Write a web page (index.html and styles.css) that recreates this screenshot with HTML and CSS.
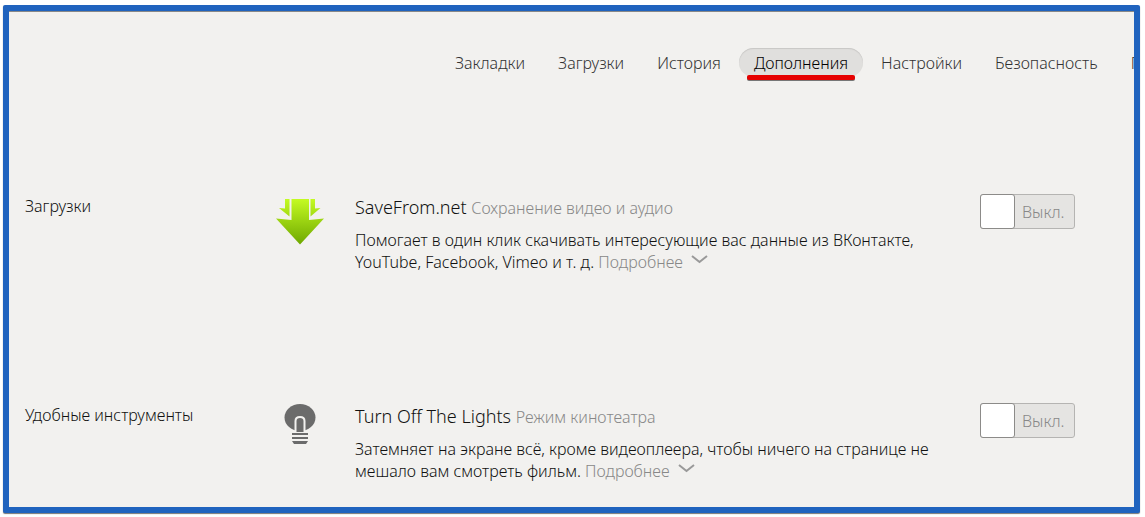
FILE: index.html
```html
<!DOCTYPE html>
<html lang="ru">
<head>
  <meta charset="UTF-8" />
  <title>Дополнения</title>
  <link rel="stylesheet" href="styles.css">
</head>
<body>
  <div class="window">
    <nav class="tabs">
      <a class="tab" href="#">Закладки</a>
      <a class="tab" href="#">Загрузки</a>
      <a class="tab" href="#">История</a>
      <a class="tab active" href="#">Дополнения</a>
      <a class="tab" href="#">Настройки</a>
      <a class="tab" href="#">Безопасность</a>
      <a class="tab" href="#">П</a>
    </nav>

    <main>
      <section class="addon">
        <div class="group">Загрузки</div>
        <svg class="icon" width="48" height="52" viewBox="0 -3 48 52">
          <defs>
            <linearGradient id="green" x1="0" y1="0" x2="0" y2="1">
              <stop offset="0" stop-color="#c4fb22" />
              <stop offset="1" stop-color="#6fa800" />
            </linearGradient>
          </defs>
          <path fill="url(#green)" d="M15.500 2h17.500v21l15-1.500L24 47.500L0 21.500L15.500 23zM9 2h4.500v17.500L3 11L9 11.500zM34.500 2H39v9.500l5.500-.500L34.500 19.500z" />
        </svg>
        <div class="info">
          <h2>SaveFrom.net <small>Сохранение видео и аудио</small></h2>
          <p>Помогает в один клик скачивать интересующие вас данные из ВКонтакте, YouTube, Facebook, Vimeo и т. д.
            <a class="more" href="#">Подробнее <svg width="17" height="9" viewBox="0 0 17 9"><path d="M1 1l7.500 6L16 1" /></svg></a></p>
        </div>
        <label class="switch"><input type="checkbox"><span>Выкл.</span></label>
      </section>

      <section class="addon">
        <div class="group">Удобные инструменты</div>
        <svg class="icon" width="48" height="52" viewBox="0 1 48 52">
          <ellipse cx="24" cy="15.500" rx="15.500" ry="13.500" fill="#6b6b6b" />
          <path fill="#6b6b6b" stroke="#f2f1ef" stroke-width="2" d="M19.500 30V19q0-4 4.500-4t4.500 4v11" />
          <path fill="#6b6b6b" d="M16 31h16v2H16zM16 35h16v2H16zM16 39h16l-2 3H18z" />
        </svg>
        <div class="info">
          <h2>Turn Off The Lights <small>Режим кинотеатра</small></h2>
          <p>Затемняет на экране всё, кроме видеоплеера, чтобы ничего на странице не мешало вам смотреть фильм.
            <a class="more" href="#">Подробнее <svg width="17" height="9" viewBox="0 0 17 9"><path d="M1 1l7.500 6L16 1" /></svg></a></p>
        </div>
        <label class="switch"><input type="checkbox"><span>Выкл.</span></label>
      </section>
    </main>
  </div>
</body>
</html>
```
FILE: styles.css
```css
* {
  box-sizing: border-box;
}

body {
  margin: 0;
  padding: 5px 5px 3px 3px;
  background: white;
  color: #111;
  font-family: "Noto Sans", "Open Sans", sans-serif;
  font-size: 16px;
  font-weight: 300;
  line-height: 22px;
}

a {
  color: inherit;
  text-decoration: none;
}

.window {
  border: 6px solid #2063be;
  border-radius: 2px;
  background: #f2f1ef;
  box-shadow: 0 1px 1px #777, inset 0 1px 0 #888;
  overflow: hidden;
}

.tabs {
  display: flex;
  gap: 3px;
  padding: 37px 0 0 431px;
}

.tab {
  flex: none;
  height: 29px;
  padding: 4px 15px;
  border-radius: 15px;
  color: #333;
}

.tab.active {
  position: relative;
  background: #e0dfdd;
  box-shadow: inset 0 1px 1px #c8c7c5;
  color: #000;
}

.tab.active::after {
  content: "";
  position: absolute;
  left: 8px;
  right: 8px;
  bottom: -3px;
  height: 5px;
  border-radius: 2px;
  background: #e60000;
  box-shadow: 0 1px 0 #777;
}

main {
  padding: 117px 59px 25px 16px;
}

.addon {
  display: grid;
  grid-template-columns: 251px 79px 1fr 95px;
  align-items: start;
}

.addon + .addon {
  margin-top: 130px;
}

.group {
  padding-top: 1px;
}

.info h2 {
  margin: 0;
  font-size: 18px;
  font-weight: 300;
  line-height: 26px;
}

.info small {
  font-size: 16px;
  color: #888;
}

.info p {
  max-width: 585px;
  margin: 8px 0 0;
}

.more {
  color: #888;
  white-space: nowrap;
}

.more svg {
  margin: 0 0 4px 4px;
  fill: none;
  stroke: #999;
  stroke-width: 2;
}

.switch {
  display: flex;
  width: 95px;
  height: 35px;
  border: 1px solid #b5b4b2;
  border-radius: 3px;
  background: #e5e4e2;
  color: #888;
  line-height: 34px;
  cursor: pointer;
}

.switch input {
  appearance: none;
  width: 35px;
  height: 35px;
  margin: -1px 7px 0 -1px;
  border: 1px solid #8c8b89;
  border-radius: 3px;
  background: white;
}
```
